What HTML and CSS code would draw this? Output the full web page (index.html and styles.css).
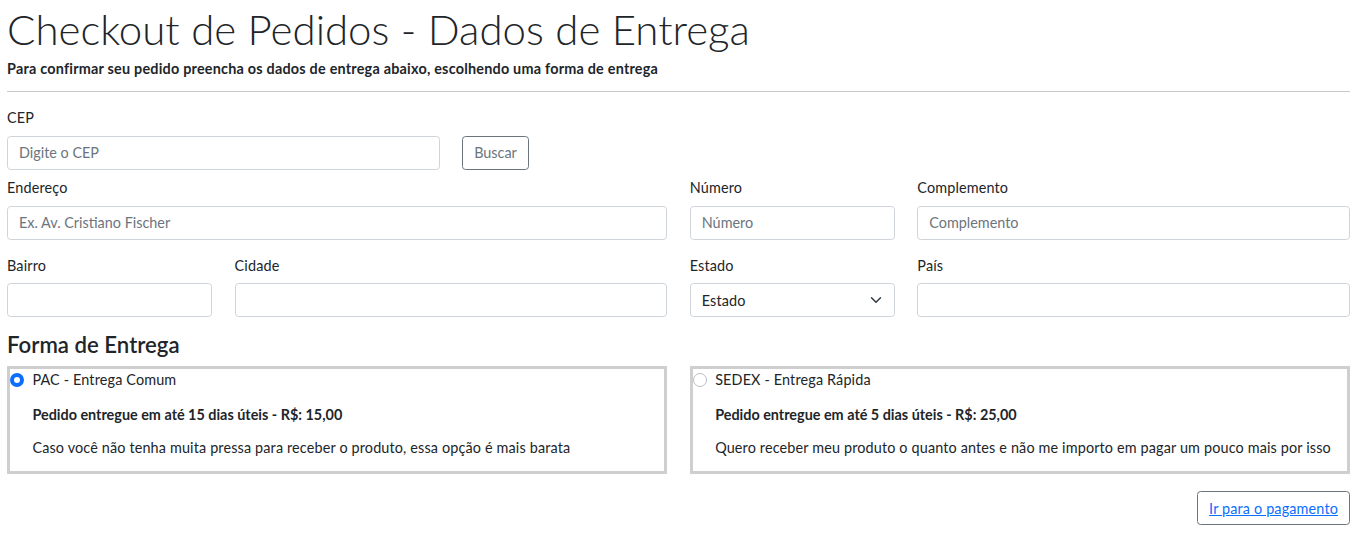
FILE: index.html
```html
<!DOCTYPE html>
<html lang="pt-BR">
<head>
<meta charset="utf-8">
<title>Checkout de Pedidos - Dados de Entrega</title>
<link rel="stylesheet" href="styles.css">
</head>
<body>
<div class="page">
  <h1 class="title">Checkout de Pedidos - Dados de Entrega</h1>
  <p class="subtitle">Para confirmar seu pedido preencha os dados de entrega abaixo, escolhendo uma forma de entrega</p>
  <hr class="divider">
  <form class="form">
    <div class="row row-cep">
      <div class="field span-4">
        <label class="label" for="cep">CEP</label>
        <input class="input" id="cep" type="text" placeholder="Digite o CEP">
      </div>
      <div class="field span-2">
        <button type="button" class="btn btn-outline">Buscar</button>
      </div>
    </div>
    <div class="row row-addr">
      <div class="field span-6">
        <label class="label" for="end">Endereço</label>
        <input class="input" id="end" type="text" placeholder="Ex. Av. Cristiano Fischer">
      </div>
      <div class="field span-2">
        <label class="label" for="num">Número</label>
        <input class="input" id="num" type="text" placeholder="Número">
      </div>
      <div class="field span-4">
        <label class="label" for="comp">Complemento</label>
        <input class="input" id="comp" type="text" placeholder="Complemento">
      </div>
    </div>
    <div class="row row-city">
      <div class="field span-2">
        <label class="label" for="bairro">Bairro</label>
        <input class="input" id="bairro" type="text">
      </div>
      <div class="field span-4">
        <label class="label" for="cidade">Cidade</label>
        <input class="input" id="cidade" type="text">
      </div>
      <div class="field span-2">
        <label class="label" for="estado">Estado</label>
        <div class="select">
          <span class="select-text">Estado</span>
          <svg class="chevron" width="12" height="12" viewBox="0 0 16 16"><path d="M2 5l6 6 6-6" fill="none" stroke="#343a40" stroke-width="2" stroke-linecap="round" stroke-linejoin="round"/></svg>
        </div>
      </div>
      <div class="field span-4">
        <label class="label" for="pais">País</label>
        <input class="input" id="pais" type="text">
      </div>
    </div>

    <h4 class="section-title">Forma de Entrega</h4>
    <div class="row row-ship">
      <div class="ship span-6">
        <div class="ship-head">
          <span class="radio radio-checked"></span>
          <span class="ship-name">PAC - Entrega Comum</span>
        </div>
        <p class="ship-price">Pedido entregue em até 15 dias úteis - R$: 15,00</p>
        <p class="ship-desc">Caso você não tenha muita pressa para receber o produto, essa opção é mais barata</p>
      </div>
      <div class="ship span-6">
        <div class="ship-head">
          <span class="radio"></span>
          <span class="ship-name">SEDEX - Entrega Rápida</span>
        </div>
        <p class="ship-price">Pedido entregue em até 5 dias úteis - R$: 25,00</p>
        <p class="ship-desc">Quero receber meu produto o quanto antes e não me importo em pagar um pouco mais por isso</p>
      </div>
    </div>
    <div class="actions">
      <span class="btn btn-pay"><a href="#" class="pay-link">Ir para o pagamento</a></span>
    </div>
  </form>
</div>
</body>
</html>
```
FILE: styles.css
```css
* { box-sizing: border-box; }
body {
  margin: 0;
  font-family: Lato, "Open Sans", "Noto Sans", sans-serif;
  font-size: 14.4px;
  line-height: 1.5;
  letter-spacing: 0.15px;
  color: #212529;
  background: #fff;
}
.page { padding: 0 5px 0 7px; }
.title {
  margin: 4px 0 4px;
  font-size: 42px;
  font-weight: 300;
  line-height: 1.2;
  letter-spacing: 0;
}
.subtitle {
  margin: 0;
  font-size: 14.4px;
  font-weight: 700;
  line-height: 21.6px;
  letter-spacing: 0.22px;
}
.divider {
  margin: 11px 0 15px;
  border: 0;
  border-top: 1px solid #c8c9ca;
}
.row {
  display: grid;
  grid-template-columns: repeat(12, 1fr);
  column-gap: 22.5px;
  align-items: end;
}
.span-2 { grid-column: span 2; }
.span-4 { grid-column: span 4; }
.span-6 { grid-column: span 6; }
.row-cep { margin-bottom: 7px; }
.row-addr { margin-bottom: 15px; }
.row-city { margin-bottom: 15px; }
.field { display: flex; flex-direction: column; align-items: flex-start; }
.label { display: block; margin-bottom: 7.2px; line-height: 21.6px; }
.input, .select {
  width: 100%;
  height: 34px;
  padding: 0 11px;
  font: inherit;
  color: #212529;
  border: 1px solid #ced4da;
  border-radius: 3.6px;
  background: #fff;
  outline: none;
}
.input::placeholder { color: #6c757d; opacity: 1; }
.select {
  display: flex;
  align-items: center;
  justify-content: space-between;
  padding-right: 12px;
}
.chevron { display: block; }
.btn {
  display: inline-flex;
  align-items: center;
  height: 34px;
  padding: 0 11px;
  font: inherit;
  border: 1px solid #6c757d;
  border-radius: 3.6px;
  background: #fff;
}
.btn-outline { color: #6c757d; }
.section-title {
  margin: 0 0 8px;
  font-size: 22.2px;
  font-weight: 600;
  line-height: 26px;
  letter-spacing: 0;
}
.ship {
  border: 3px solid #cfcfcf;
  height: 108px;
}
.ship-head { display: flex; align-items: center; height: 21.6px; }
.radio {
  width: 14.4px;
  height: 14.4px;
  margin-right: 8px;
  border: 1px solid #b9bfc5;
  border-radius: 50%;
  background: #fff;
  flex: none;
}
.radio-checked {
  border: 4px solid #0d6efd;
  background: #fff;
}
.ship-name { line-height: 21.6px; }
.ship-price {
  margin: 13.4px 0 0 22.4px;
  font-weight: 700;
  line-height: 21.6px;
  letter-spacing: 0;
}
.ship-desc {
  margin: 11.4px 0 0 22.4px;
  line-height: 21.6px;
}
.actions {
  display: flex;
  justify-content: flex-end;
  margin-top: 17px;
}
.btn-pay { padding: 0 11px; }
.pay-link { color: #0d6efd; text-decoration: underline; }
```
